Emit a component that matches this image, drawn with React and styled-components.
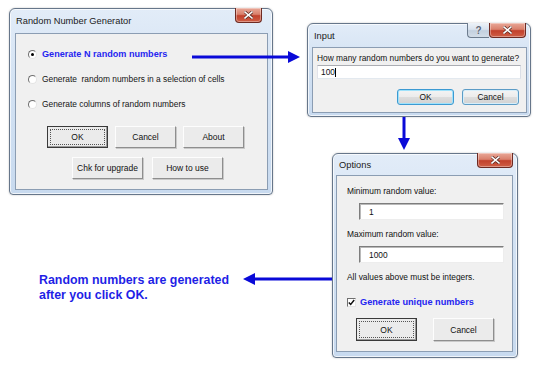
import React from "react";
import styled, { createGlobalStyle } from "styled-components";

const GlobalStyle = createGlobalStyle`
  html, body {
    margin: 0;
    padding: 0;
    background: #ffffff;
  }
  body {
    font-family: "Liberation Sans", Arial, sans-serif;
  }
`;

const Canvas = styled.div`
  position: relative;
  width: 540px;
  height: 373px;
  overflow: hidden;
  background: #ffffff;
`;

const Window = styled.div`
  position: absolute;
  left: ${(p) => p.$x}px;
  top: ${(p) => p.$y}px;
  width: ${(p) => p.$w}px;
  height: ${(p) => p.$h}px;
  box-sizing: border-box;
  display: flex;
  flex-direction: column;
  border: 1px solid #66768a;
  border-radius: 6px 6px 4px 4px;
  background: linear-gradient(180deg, #e2ecf8 0%, #d3e2f3 40%, #c8daef 100%);
  box-shadow: 0 0 2px rgba(0, 0, 0, 0.25), inset 0 0 0 1px rgba(255, 255, 255, 0.7);
`;

const TitleBar = styled.div`
  position: relative;
  height: ${(p) => p.$h || 23}px;
  flex: none;
  display: flex;
  align-items: center;
  padding-left: 6px;
  font-size: 9.3px;
  color: #1b1b1b;
`;

const Controls = styled.div`
  position: absolute;
  top: -1px;
  right: ${(p) => p.$right || 5}px;
  display: flex;
`;

const CloseBtn = styled.div`
  width: ${(p) => p.$w}px;
  height: 15px;
  box-sizing: border-box;
  display: flex;
  align-items: center;
  justify-content: center;
  border: 1px solid #6d2a22;
  border-top: none;
  border-radius: 0 0 4px 4px;
  background: linear-gradient(180deg, #e9a898 0%, #d9806c 45%, #c2412c 55%, #cf5f46 100%);
  box-shadow: inset 0 0 0 1px rgba(255, 255, 255, 0.35);
`;

const HelpBtn = styled.div`
  width: 22px;
  height: 15px;
  box-sizing: border-box;
  display: flex;
  align-items: center;
  justify-content: center;
  border: 1px solid #6d7c8e;
  border-top: none;
  border-right: none;
  border-radius: 0 0 0 4px;
  background: linear-gradient(180deg, #edf2f8 0%, #d9e3ee 45%, #c3d0df 55%, #d3dde8 100%);
  font-size: 10px;
  font-weight: 700;
  color: #5b6675;
  text-shadow: 0 0 1px #ffffff;
`;

const Client = styled.div`
  flex: 1;
  margin: 0 ${(p) => p.$r || 4}px ${(p) => p.$b || 4}px ${(p) => p.$l || 5}px;
  border: 1px solid #8b9db3;
  background: #f0f0f0;
  display: flex;
  flex-direction: column;
  align-items: flex-start;
  padding: ${(p) => p.$pad};
  font-size: 8.4px;
  color: #111;
`;

const RadioList = styled.div`
  display: flex;
  flex-direction: column;
  gap: 11px;
`;

const RadioRow = styled.div`
  height: 14px;
  display: flex;
  align-items: center;
  gap: 5px;
  white-space: pre;
  font-size: ${(p) => (p.$active ? "9.1px" : "8.4px")};
  font-weight: ${(p) => (p.$active ? 700 : 400)};
  color: ${(p) => (p.$active ? "#2525f0" : "#141414")};
`;

const Radio = styled.span`
  width: 9px;
  height: 9px;
  box-sizing: border-box;
  border-radius: 50%;
  border: 1px solid;
  border-color: #6f6f6f #e4e4e4 #e4e4e4 #6f6f6f;
  background: #ffffff;
  display: flex;
  align-items: center;
  justify-content: center;
  &::after {
    content: "";
    width: 3px;
    height: 3px;
    border-radius: 50%;
    background: ${(p) => (p.$on ? "#000" : "transparent")};
  }
`;

const ButtonRow = styled.div`
  display: flex;
  gap: ${(p) => p.$gap}px;
  margin-top: ${(p) => p.$mt}px;
  margin-left: ${(p) => p.$ml || 0}px;
  align-self: ${(p) => (p.$end ? "flex-end" : "flex-start")};
`;

const Button = styled.div`
  position: relative;
  width: ${(p) => p.$w}px;
  height: ${(p) => p.$h || 22}px;
  box-sizing: border-box;
  display: flex;
  align-items: center;
  justify-content: center;
  font-size: 8.5px;
  color: #111;
  background: #ebebeb;
  border: 1px solid;
  border-color: ${(p) =>
    p.$default ? "#3a3a3a" : "#fdfdfd #8e8e8e #8e8e8e #fdfdfd"};
  box-shadow: ${(p) =>
    p.$default ? "inset -1px -1px 0 #9a9a9a" : "1px 1px 0 #c9c9c9"};
  &::after {
    content: "";
    display: ${(p) => (p.$default ? "block" : "none")};
    position: absolute;
    inset: 2px;
    border: 1px dotted #555;
  }
`;

const AeroButton = styled.div`
  width: 57px;
  height: 16px;
  box-sizing: border-box;
  display: flex;
  align-items: center;
  justify-content: center;
  font-size: 8.4px;
  color: #111;
  border: 1px solid ${(p) => (p.$focus ? "#3c9ad2" : "#5c9cc6")};
  border-radius: 3px;
  background: linear-gradient(180deg, #f4f4f4 0%, #ececec 48%, #dddddd 52%, #d2d2d2 100%);
  box-shadow: inset 0 0 0 1px ${(p) => (p.$focus ? "#9fe2fb" : "#d6eefa")};
`;

const Label = styled.div`
  height: 11px;
  line-height: 11px;
  margin-top: ${(p) => p.$mt || 0}px;
  white-space: nowrap;
`;

const AeroField = styled.div`
  width: 204px;
  height: 14px;
  margin-top: 1px;
  box-sizing: border-box;
  display: flex;
  align-items: center;
  padding-left: 3px;
  background: #ffffff;
  border: 1px solid;
  border-color: #abadb3 #dbdfe6 #e3e9ef #e2e3ea;
  font-size: 8.4px;
`;

const Caret = styled.span`
  width: 1px;
  height: 9px;
  background: #000;
  margin-left: 0.5px;
`;

const SunkenField = styled.div`
  width: 145px;
  height: 17px;
  margin-top: 6px;
  margin-left: 12px;
  box-sizing: border-box;
  display: flex;
  align-items: center;
  padding-left: 9px;
  background: #ffffff;
  border: 1px solid;
  border-color: #7d7d7d #ededed #ededed #7d7d7d;
  box-shadow: inset 1px 1px 0 #b9b9b9;
  font-size: 8.4px;
`;

const CheckRow = styled.div`
  display: flex;
  align-items: center;
  gap: 4px;
  height: 14px;
  margin-top: 12px;
  font-size: 9.2px;
  font-weight: 700;
  color: #2525f0;
`;

const Check = styled.span`
  width: 9px;
  height: 9px;
  box-sizing: border-box;
  border: 1px solid;
  border-color: #6f6f6f #e4e4e4 #e4e4e4 #6f6f6f;
  background: #fff;
  display: flex;
  align-items: center;
  justify-content: center;
`;

const Caption = styled.div`
  position: absolute;
  left: 39px;
  top: 273px;
  font-family: "Liberation Sans", Arial, sans-serif;
  font-weight: 700;
  font-size: 12.4px;
  line-height: 15px;
  color: #1f1fe6;
`;

const ArrowSvg = styled.svg`
  position: absolute;
  left: ${(p) => p.$x}px;
  top: ${(p) => p.$y}px;
  overflow: visible;
`;

const CloseGlyph = () => (
  <svg width="9" height="8" viewBox="0 0 9 8">
    <path d="M1 1 L8 7 M8 1 L1 7" stroke="#5a2a22" strokeWidth="3" strokeLinecap="square" />
    <path d="M1 1 L8 7 M8 1 L1 7" stroke="#ffffff" strokeWidth="1.6" strokeLinecap="square" />
  </svg>
);

const BLUE = "#0a0ad8";

const App = () => {
  return (
    <Canvas>
      <GlobalStyle />

      <Window $x={9} $y={8} $w={264} $h={187}>
        <TitleBar $h={24}>
          Random Number Generator
          <Controls $right={10}>
            <CloseBtn $w={27}>
              <CloseGlyph />
            </CloseBtn>
          </Controls>
        </TitleBar>
        <Client $l={5} $r={4} $b={4} $pad="13px 0 0 12px">
          <RadioList>
            <RadioRow $active>
              <Radio $on />
              Generate N random numbers
            </RadioRow>
            <RadioRow>
              <Radio />
              {"Generate  random numbers in a selection of cells"}
            </RadioRow>
            <RadioRow>
              <Radio />
              Generate columns of random numbers
            </RadioRow>
          </RadioList>
          <ButtonRow $gap={7} $mt={15} $ml={19}>
            <Button $w={61} $default>OK</Button>
            <Button $w={61}>Cancel</Button>
            <Button $w={61}>About</Button>
          </ButtonRow>
          <ButtonRow $gap={9} $mt={9} $ml={44}>
            <Button $w={71}>Chk for upgrade</Button>
            <Button $w={71}>How to use</Button>
          </ButtonRow>
        </Client>
      </Window>

      <Window $x={307} $y={23} $w={224} $h={94}>
        <TitleBar>
          Input
          <Controls $right={4}>
            <HelpBtn>?</HelpBtn>
            <CloseBtn $w={37}>
              <CloseGlyph />
            </CloseBtn>
          </Controls>
        </TitleBar>
        <Client $l={4} $r={3} $b={3} $pad="5px 7px 0 4px">
          <Label>How many random numbers do you want to generate?</Label>
          <AeroField>
            100
            <Caret />
          </AeroField>
          <ButtonRow $gap={8} $mt={10} $end>
            <AeroButton $focus>OK</AeroButton>
            <AeroButton>Cancel</AeroButton>
          </ButtonRow>
        </Client>
      </Window>

      <Window $x={332} $y={153} $w={186} $h={205}>
        <TitleBar $h={21}>
          Options
          <Controls $right={4}>
            <CloseBtn $w={36}>
              <CloseGlyph />
            </CloseBtn>
          </Controls>
        </TitleBar>
        <Client $l={3} $r={4} $b={5} $pad="10px 0 0 10px">
          <Label>Minimum random value:</Label>
          <SunkenField>1</SunkenField>
          <Label $mt={9}>Maximum random value:</Label>
          <SunkenField>1000</SunkenField>
          <Label $mt={9}>All values above must be integers.</Label>
          <CheckRow>
            <Check>
              <svg width="7" height="7" viewBox="0 0 7 7">
                <path d="M0.8 3.4 L2.7 5.4 L6.2 1" fill="none" stroke="#111" strokeWidth="1.5" />
              </svg>
            </Check>
            Generate unique numbers
          </CheckRow>
          <ButtonRow $gap={16} $mt={9} $ml={9}>
            <Button $w={61} $h={23} $default>OK</Button>
            <Button $w={61} $h={23}>Cancel</Button>
          </ButtonRow>
        </Client>
      </Window>

      <ArrowSvg $x={192} $y={50} width="110" height="14" viewBox="0 0 110 14">
        <line x1="0" y1="7" x2="98" y2="7" stroke={BLUE} strokeWidth="3" />
        <polygon points="96,1 108,7 96,13" fill={BLUE} />
      </ArrowSvg>

      <ArrowSvg $x={397} $y={117} width="14" height="34" viewBox="0 0 14 34">
        <line x1="7" y1="0" x2="7" y2="22" stroke={BLUE} strokeWidth="3" />
        <polygon points="1,21 13,21 7,33" fill={BLUE} />
      </ArrowSvg>

      <ArrowSvg $x={243} $y={272} width="90" height="14" viewBox="0 0 90 14">
        <polygon points="0,7 12,1 12,13" fill={BLUE} />
        <line x1="10" y1="7" x2="89" y2="7" stroke={BLUE} strokeWidth="3" />
      </ArrowSvg>

      <Caption>
        Random numbers are generated
        <br />
        after you click OK.
      </Caption>
    </Canvas>
  );
};

export default App;
